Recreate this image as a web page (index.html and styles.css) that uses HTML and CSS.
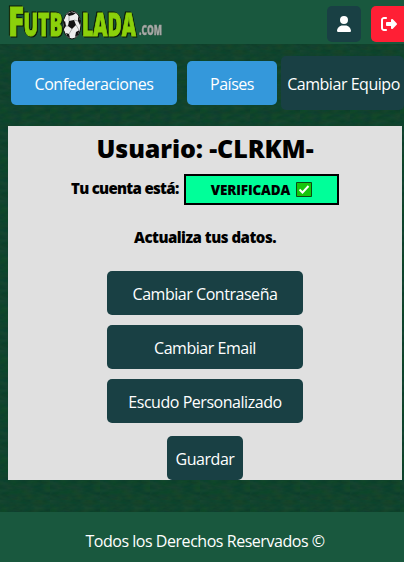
FILE: index.html
```html
<!DOCTYPE html>
<html lang="es">
<head>
<meta charset="utf-8">
<title>Futbolada</title>
<link rel="stylesheet" href="styles.css">
</head>
<body>
<svg class="grass" width="404" height="562" aria-hidden="true">
  <defs>
    <filter id="turf" x="0" y="0" width="100%" height="100%" color-interpolation-filters="sRGB">
      <feTurbulence type="fractalNoise" baseFrequency="0.09 0.2" numOctaves="4" seed="4"/>
      <feColorMatrix values="0.08 0 0 0 0.025  0.03 0.06 0 0 0.218  0 0 0.06 0 0.143  0 0 0 0 1"/>
    </filter>
    <pattern id="tile" width="50" height="50" patternUnits="userSpaceOnUse">
      <rect width="50" height="50" filter="url(#turf)"/>
    </pattern>
  </defs>
  <rect width="404" height="562" fill="url(#tile)"/>
</svg>
<header class="header">
  <svg class="logo" width="160" height="44" viewBox="0 0 160 44" role="img" aria-label="Futbolada.com">
    <g class="logo-word">
      <text x="1" y="36" font-size="41" textLength="16" lengthAdjust="spacingAndGlyphs">F</text>
      <text x="16.500" y="36" font-size="31" textLength="39" lengthAdjust="spacingAndGlyphs">UTB</text>
      <text x="75" y="36" font-size="31" textLength="54" lengthAdjust="spacingAndGlyphs">LADA</text>
    </g>
    <text class="logo-com" x="132" y="35" font-size="14" textLength="23" lengthAdjust="spacingAndGlyphs">.COM</text>
    <g transform="translate(65 25)">
      <ellipse rx="9" ry="14" fill="#ededed" stroke="#111" stroke-width="1"/>
      <path fill="#111" d="M-3-4 2-5 4 0 0 4-4 1ZM-5-11-1-13 4-12 1-10-3-9ZM6-9 8.500-4 8 0 6-4ZM-8.500-3-7-4-6 1-8 4ZM-6 8-3 9-2 13-5 11ZM4 7 7.500 5 6 10 3 12Z"/>
      <path stroke="#888" stroke-width=".7" fill="none" d="M-3-4-3-9M2-5 6-4M4 0 7 5M0 4-3 9M-4 1-6 1"/>
    </g>
  </svg>
  <div class="actions">
    <a class="icon-btn user"><svg width="14" height="16" viewBox="0 0 448 512"><path fill="#fff" d="M224 256A128 128 0 1 0 224 0a128 128 0 1 0 0 256zm-45.700 48C79.800 304 0 383.800 0 482.300C0 498.700 13.300 512 29.700 512H418.300c16.400 0 29.700-13.300 29.700-29.700C448 383.800 368.200 304 269.700 304H178.300z"/></svg></a>
    <a class="icon-btn exit"><svg width="16" height="16" viewBox="0 0 512 512"><path fill="#fff" d="M377.900 105.900L500.700 228.700c7.200 7.200 11.300 17.100 11.300 27.300s-4.100 20.100-11.300 27.300L377.900 406.100c-6.400 6.400-15 9.900-24 9.900c-18.700 0-33.900-15.200-33.900-33.900l0-62.100-128 0c-17.700 0-32-14.300-32-32l0-64c0-17.700 14.300-32 32-32l128 0 0-62.100c0-18.700 15.200-33.900 33.900-33.900c9 0 17.600 3.600 24 9.900zM160 96L96 96c-17.700 0-32 14.300-32 32l0 256c0 17.700 14.300 32 32 32l64 0c17.700 0 32 14.300 32 32s-14.300 32-32 32l-64 0c-53 0-96-43-96-96L0 128C0 75 43 32 96 32l64 0c17.700 0 32 14.300 32 32s-14.300 32-32 32z"/></svg></a>
  </div>
</header>
<nav class="nav">
  <a class="tab confed">Confederaciones</a>
  <a class="tab paises">Países</a>
  <a class="tab equipo">Cambiar Equipo</a>
</nav>
<main class="panel">
  <h1 class="title">Usuario: -CLRKM-</h1>
  <div class="status"><span class="status-label">Tu cuenta está:</span><span class="badge"><span class="badge-text">VERIFICADA</span><svg width="16" height="15" viewBox="0 0 16 15"><path fill="#16c60c" stroke="#0b4a12" d="M.5.5h15v14H.5z"/><path d="M3.500 7.500 6.500 10.500 12.500 4" fill="none" stroke="#fff" stroke-width="2"/></svg></span></div>
  <p class="hint">Actualiza tus datos.</p>
  <div class="buttons">
    <a class="btn contrasena">Cambiar Contraseña</a>
    <a class="btn email">Cambiar Email</a>
    <a class="btn escudo">Escudo Personalizado</a>
    <a class="btn save">Guardar</a>
  </div>
</main>
<footer class="footer">Todos los Derechos Reservados ©</footer>
</body>
</html>
```
FILE: styles.css
```css
* { box-sizing: border-box; }
body {
  margin: 0;
  width: 404px;
  height: 562px;
  overflow: hidden;
  display: flex;
  flex-direction: column;
  background: #10452e;
  color: #fff;
  font: 16px/24px "Open Sans", "Noto Sans", sans-serif;
  letter-spacing: -0.46px;
}
svg { display: block; flex: none; }
.grass { position: absolute; inset: 0; z-index: -1; }
.header {
  height: 44px;
  flex: none;
  display: flex;
  justify-content: space-between;
  padding-left: 7px;
  background: #19583e;
}
.logo { overflow: visible; }
.logo-word {
  font-family: "Open Sans", sans-serif;
  font-weight: 800;
  letter-spacing: 0;
  fill: #8bd10b;
  stroke: #8bd10b;
  stroke-width: 1px;
  filter: drop-shadow(1px 1px 0 #0c1a08) drop-shadow(-0.6px -0.3px 0 #0c1a08);
}
.logo-com {
  font-family: "Open Sans", sans-serif;
  font-weight: 800;
  letter-spacing: 0;
  fill: #a3a9a5;
  stroke: #a3a9a5;
  stroke-width: 0.4px;
  filter: drop-shadow(0.7px 0.7px 0 #26352c);
}
.actions { display: flex; gap: 10px; padding-top: 6px; }
.icon-btn {
  width: 34px;
  height: 36px;
  display: flex;
  align-items: center;
  justify-content: center;
  border-radius: 5px;
  background: #194044;
}
.exit { background: #ff1f35; width: 33px; border-radius: 5px 0 0 5px; padding-left: 3px; }
.nav {
  height: 82px;
  flex: none;
  display: flex;
  align-items: flex-start;
  padding: 12px 0 0 11px;
}
.tab {
  height: 44px;
  margin-top: 5px;
  display: flex;
  align-items: center;
  justify-content: center;
  padding-top: 2px;
  border-radius: 5px;
  background: #3498db;
  white-space: nowrap;
}
.confed { width: 166px; margin-right: 10px; }
.paises { width: 90px; margin-right: 4px; }
.equipo { width: 123px; height: 54px; margin-top: 0; padding-left: 2px; background: #194044; }
.panel {
  width: 394px;
  height: 354px;
  flex: none;
  margin-left: 8px;
  background: #e0e0e0;
  color: #000;
}
.title {
  margin: 0;
  padding-top: 4px;
  font-size: 25px;
  line-height: 36px;
  font-weight: 800;
  letter-spacing: -0.1px;
  text-align: center;
}
.status { display: flex; margin: 8px 0 0 63px; font-weight: 800; font-size: 15px; }
.status-label { width: 113px; line-height: 28px; white-space: nowrap; letter-spacing: -0.7px; }
.badge {
  width: 155px;
  height: 31px;
  display: flex;
  align-items: center;
  justify-content: center;
  gap: 6px;
  border: 2px solid #000;
  background: #00ff99;
  font-size: 13.5px;
  letter-spacing: -0.15px;
}
.hint { margin: 20px 0 0; font-weight: 800; font-size: 15px; text-align: center; letter-spacing: -0.5px; }
.buttons {
  display: flex;
  flex-direction: column;
  align-items: center;
  gap: 10px;
  margin-top: 22px;
  color: #fff;
}
.btn {
  width: 196px;
  height: 44px;
  display: flex;
  align-items: center;
  justify-content: center;
  padding-top: 1px;
  border-radius: 5px;
  background: #194044;
}
.save { width: 76px; margin-top: 3px; }
.footer {
  height: 50px;
  flex: none;
  margin-top: 32px;
  padding: 17px 0 0 6px;
  background: #19583e;
  text-align: center;
}
```
